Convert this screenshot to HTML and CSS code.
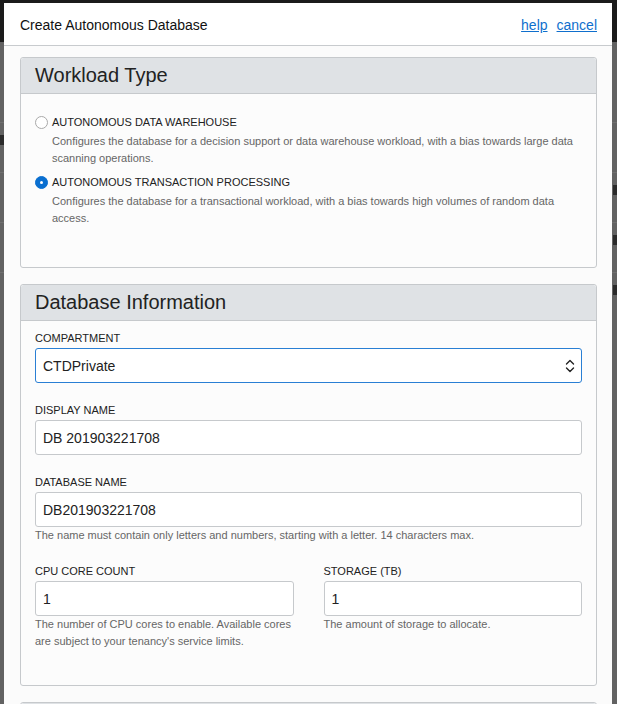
FILE: index.html
```html
<!DOCTYPE html>
<html>
<head>
<meta charset="utf-8">
<link rel="stylesheet" href="styles.css">
</head>
<body>
<div class="backdrop">
  <div class="bg-top"></div>
  <div class="bg-main">
    <div class="bg-row"><span class="bg-mark"></span><span></span></div>
    <div class="bg-row"><span></span><span class="bg-mark"></span></div>
    <div class="bg-row"><span></span><span class="bg-mark"></span></div>
    <div class="bg-row"><span></span><span class="bg-mark"></span></div>
  </div>
</div>
<div class="dialog">
  <div class="dlg-head">
    <div class="dlg-title">Create Autonomous Database</div>
    <div class="dlg-links"><a href="#">help</a><a href="#">cancel</a></div>
  </div>
  <div class="dlg-body">
    <section class="panel panel-workload">
      <h2 class="panel-head">Workload Type</h2>
      <div class="panel-body">
        <div class="radio-item">
          <div class="radio-row"><span class="radio"></span><span class="radio-label">AUTONOMOUS DATA WAREHOUSE</span></div>
          <p class="radio-desc">Configures the database for a decision support or data warehouse workload, with a bias towards large data scanning operations.</p>
        </div>
        <div class="radio-item">
          <div class="radio-row"><span class="radio checked"></span><span class="radio-label">AUTONOMOUS TRANSACTION PROCESSING</span></div>
          <p class="radio-desc">Configures the database for a transactional workload, with a bias towards high volumes of random data access.</p>
        </div>
      </div>
    </section>
    <section class="panel panel-info">
      <h2 class="panel-head">Database Information</h2>
      <div class="panel-body">
        <div class="field">
          <div class="field-label">COMPARTMENT</div>
          <div class="input select"><span>CTDPrivate</span>
            <svg class="chev" width="10" height="14" viewBox="0 0 10 14"><path d="M1.5 5 L5 1.5 L8.5 5 M1.5 9 L5 12.5 L8.5 9" fill="none" stroke="#222" stroke-width="1.4" stroke-linecap="round" stroke-linejoin="round"/></svg>
          </div>
        </div>
        <div class="field">
          <div class="field-label">DISPLAY NAME</div>
          <div class="input">DB 201903221708</div>
        </div>
        <div class="field">
          <div class="field-label">DATABASE NAME</div>
          <div class="input">DB201903221708</div>
          <p class="help">The name must contain only letters and numbers, starting with a letter. 14 characters max.</p>
        </div>
        <div class="field-grid">
          <div class="field">
            <div class="field-label">CPU CORE COUNT</div>
            <div class="input">1</div>
            <p class="help">The number of CPU cores to enable. Available cores are subject to your tenancy's service limits.</p>
          </div>
          <div class="field">
            <div class="field-label">STORAGE (TB)</div>
            <div class="input">1</div>
            <p class="help">The amount of storage to allocate.</p>
          </div>
        </div>
      </div>
    </section>
    <section class="panel panel-next"><div class="panel-head"></div></section>
  </div>
</div>
</body>
</html>
```
FILE: styles.css
```css
* { box-sizing: border-box; }
html, body { margin: 0; padding: 0; }
body {
  width: 617px;
  height: 704px;
  overflow: hidden;
  position: relative;
  font-family: "Liberation Sans", Arial, sans-serif;
  color: #333;
  background: #5e5e5e;
}
.backdrop { position: absolute; inset: 0; }
.bg-top { height: 42px; background: #1b1b1b; }
.bg-main { background: #626262; height: 662px; padding-top: 80px; }
.bg-row {
  display: flex;
  justify-content: space-between;
  height: 50px;
  border-top: 1px solid #6f6f6f;
  padding-top: 12px;
}
.bg-row span { width: 4px; height: 10px; }
.bg-row .bg-mark { background: #2a2a2a; }
.dialog {
  position: absolute;
  left: 4px;
  top: 3px;
  width: 608px;
  height: 720px;
  background: #fbfbfb;
  display: flex;
  flex-direction: column;
}
.dlg-head {
  flex: none;
  height: 43px;
  background: #fff;
  border-bottom: 1px solid #c8cbce;
  display: flex;
  align-items: center;
  justify-content: space-between;
  padding: 2px 15px 0 16px;
}
.dlg-title { font-size: 14px; color: #111; }
.dlg-links { display: flex; gap: 9px; font-size: 14px; }
.dlg-links a { color: #0f6fcd; text-decoration: underline; }
.dlg-body {
  flex: none;
  padding: 11px 15px 0 16px;
  display: flex;
  flex-direction: column;
  gap: 16px;
}
.panel {
  flex: none;
  border: 1px solid #c6c9cc;
  border-radius: 3px;
  background: #fcfcfc;
}
.panel-head {
  margin: 0;
  height: 36px;
  background: #dfe2e5;
  border-bottom: 1px solid #c6c9cc;
  border-radius: 3px 3px 0 0;
  font-size: 20px;
  font-weight: normal;
  color: #222;
  padding: 0 14px;
  display: flex;
  align-items: center;
}
.panel-body { padding: 20px 14px 0 14px; }
.panel-workload { height: 211px; }
.panel-info { height: 402px; }
.panel-info .panel-body { padding-top: 9px; }
.panel-next { height: 30px; }
.radio-item + .radio-item { margin-top: 7px; }
.radio-row { display: flex; align-items: center; height: 16px; }
.radio {
  width: 13px; height: 13px;
  border-radius: 50%;
  border: 1px solid #a9a9a9;
  background: #fff;
  margin-right: 4px;
  flex: none;
  position: relative;
}
.radio.checked { background: #0a6fd0; border-color: #0a6fd0; }
.radio.checked::after {
  content: "";
  position: absolute;
  left: 4px; top: 4px;
  width: 3px; height: 3px;
  border-radius: 50%;
  background: #fff;
}
.radio-label { font-size: 11px; color: #222; }
.radio-desc {
  margin: 3px 0 0 17px;
  font-size: 11px;
  line-height: 17px;
  color: #666;
}
.field { margin-bottom: 19px; }
.field-label { font-size: 11px; line-height: 16px; color: #222; margin-bottom: 2px; }
.input {
  height: 35px;
  border: 1px solid #c6c9cc;
  border-radius: 3px;
  background: #fff;
  font-size: 14px;
  color: #222;
  display: flex;
  align-items: center;
  padding: 0 7px;
}
.input.select {
  border-color: #2a7fd4;
  justify-content: space-between;
  padding-right: 6px;
}
.chev { margin-top: 1px; }
.help {
  margin: 0;
  font-size: 11px;
  line-height: 17px;
  color: #666;
}
.field-grid {
  display: grid;
  grid-template-columns: 1fr 1fr;
  column-gap: 30px;
}
```
